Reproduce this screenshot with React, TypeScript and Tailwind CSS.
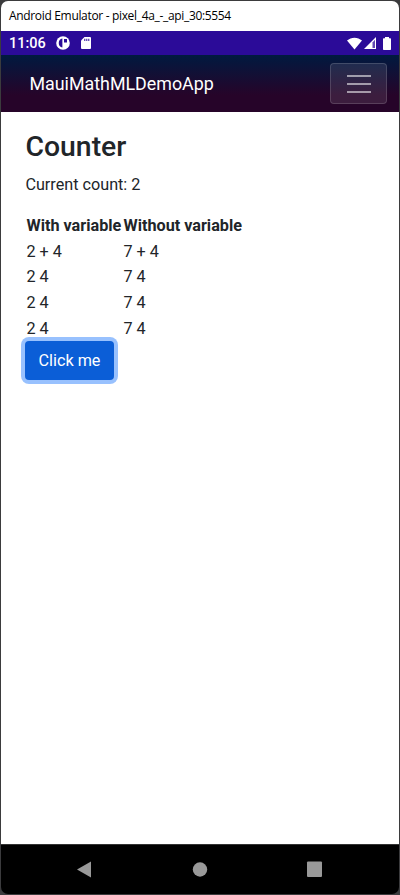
const rows = [
  ["2 + 4", "7 + 4"],
  ["2 4", "7 4"],
  ["2 4", "7 4"],
  ["2 4", "7 4"],
];

function TitleBar() {
  return (
    <div className="flex h-[30px] shrink-0 items-center bg-white pl-2 font-['Open_Sans',sans-serif] text-[12px] text-black">
      <span className="whitespace-nowrap tracking-[-0.33px]">Android Emulator - pixel_4a_-_api_30:5554</span>
    </div>
  );
}

function StatusBar() {
  return (
    <div className="flex h-6 shrink-0 items-center bg-[#2b0b98] pr-2 pl-2 text-white">
      <span className="w-[47px] pt-[2px] whitespace-nowrap text-[14.5px] font-medium">11:06</span>
      <svg width="14" height="14" viewBox="0 0 14 14">
        <circle cx="7" cy="7" r="6.8" fill="#fff" />
        <path d="M6.400 2.500v9A4.600 4.600 0 0 1 6.400 2.500z" fill="#2b0b98" />
        <path d="M8 3h3v3.500H8z" fill="#2b0b98" />
      </svg>
      <svg className="ml-[11px]" width="10" height="12" viewBox="0 0 10 12">
        <path d="M3.5 0H9a1 1 0 0 1 1 1v10a1 1 0 0 1-1 1H1a1 1 0 0 1-1-1V3.6z" fill="#fff" />
        <path d="M3.3 1.8h1v2.2h-1zM5.3 1.8h1v2.2h-1zM7.3 1.8h1v2.2h-1z" fill="#2b0b98" />
      </svg>
      <svg className="ml-auto" width="15" height="13" viewBox="0 0 15 13">
        <path d="M0 3.6C4.2-.3 10.800-.3 15 3.600L7.500 12.600z" fill="#fff" />
      </svg>
      <svg className="ml-[2px]" width="12" height="12" viewBox="0 0 12 12">
        <path d="M12 0v12H0z" fill="#fff" />
        <path d="M8.500 5.500v5.500H11V2.800z" fill="#2b0b98" opacity=".75" />
      </svg>
      <svg className="ml-[7px]" width="8" height="13" viewBox="0 0 8 13">
        <path d="M2 0h4v1.200h1.300a.7.7 0 0 1 .7.7v10.400a.7.7 0 0 1-.7.7H.7a.7.7 0 0 1-.7-.7V1.900a.7.7 0 0 1 .7-.7H2z" fill="#fff" />
      </svg>
    </div>
  );
}

function NavBar() {
  return (
    <div className="flex h-[57px] shrink-0 items-center justify-between bg-[linear-gradient(180deg,#001a40_0%,#260429_70%)] pr-3 pl-[28.5px]">
      <span className="pt-[2px] whitespace-nowrap text-[17.85px] text-white">MauiMathMLDemoApp</span>
      <button className="flex h-[41px] w-[57px] flex-col items-center justify-center gap-[6px] rounded border border-white/15 bg-white/10">
        <span className="h-[2px] w-6 bg-white/55" />
        <span className="h-[2px] w-6 bg-white/55" />
        <span className="h-[2px] w-6 bg-white/55" />
      </button>
    </div>
  );
}

function Content() {
  return (
    <main className="flex grow flex-col items-start bg-white pt-[18px] pl-6 text-[16.2px] text-[#212529]">
      <h1 className="h-[34px] pl-[0.4px] text-[28.4px] leading-[34px] font-medium">Counter</h1>
      <p className="mt-[9px] h-6 pl-[0.4px] leading-6">Current count: 2</p>
      <div className="mt-4 grid grid-cols-[97px_auto] pl-[1.5px]">
        <div className="h-[25.5px] leading-[26px] font-bold whitespace-nowrap">With variable</div>
        <div className="h-[25.5px] leading-[26px] font-bold whitespace-nowrap">Without variable</div>
        {rows.flatMap((row, r) =>
          row.map((cell, c) => (
            <div key={`${r}-${c}`} className="h-[25.8px] leading-[26px]">
              {cell}
            </div>
          )),
        )}
      </div>
      <button className="-mt-px h-[39px] w-[89px] rounded bg-[#0b5ed7] pt-[2px] text-white shadow-[0_0_0_4px_#98c1fe]">
        Click me
      </button>
    </main>
  );
}

function SystemNav() {
  return (
    <div className="h-[50px] shrink-0 border-t border-[#333] bg-black">
      <svg className="block" width="398" height="49" viewBox="0 0 398 49" fill="#999">
        <path d="M76 24.500 90 16.500v16z" />
        <circle cx="199" cy="24.500" r="7.200" />
        <rect x="306" y="16.500" width="15" height="15.500" rx="1" />
      </svg>
    </div>
  );
}

export default function App() {
  return (
    <div className="h-[895px] w-[400px] bg-[#3b3b3d] p-px font-[Roboto,sans-serif]">
      <div className="flex h-[893px] w-[398px] flex-col overflow-hidden rounded-[7px]">
        <TitleBar />
        <StatusBar />
        <NavBar />
        <Content />
        <SystemNav />
      </div>
    </div>
  );
}
